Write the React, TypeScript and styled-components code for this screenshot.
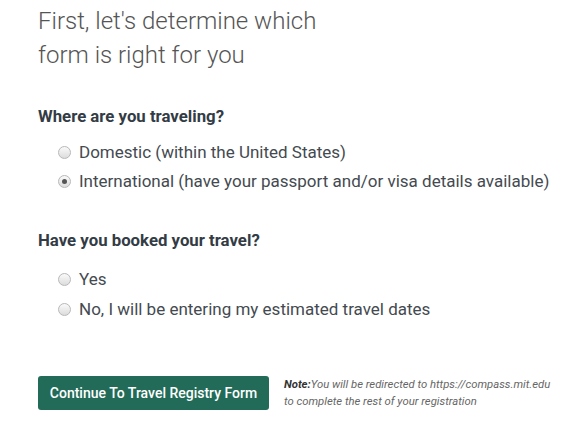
import React from "react";
import styled, { createGlobalStyle } from "styled-components";

const Global = createGlobalStyle`
  html, body { margin: 0; padding: 0; background: #fff; }
  body { font-family: Roboto, "Liberation Sans", sans-serif; }
`;

const Page = styled.div`
  padding: 4px 0 0 38px;
  width: 583px;
  box-sizing: border-box;
`;

const Title = styled.h1`
  margin: 0;
  font-weight: 300;
  font-size: 24px;
  line-height: 34px;
  color: #555;
  width: 300px;
`;

const Question = styled.h2<{ $top: number }>`
  margin: ${(p) => p.$top}px 0 0 0;
  font-size: 16.8px;
  font-weight: 700;
  line-height: 20px;
  color: #333c45;
`;

const Options = styled.div<{ $top: number; $gap: number }>`
  display: flex;
  flex-direction: column;
  gap: ${(p) => p.$gap}px;
  margin: ${(p) => p.$top}px 0 0 20px;
`;

const Option = styled.label`
  display: flex;
  align-items: center;
  gap: 8px;
  font-size: 17px;
  line-height: 20px;
  color: #444a50;
`;

const Radio = styled.span<{ $checked?: boolean }>`
  width: 11px;
  height: 11px;
  border-radius: 50%;
  border: 1px solid #b8b8b8;
  background: linear-gradient(#fafafa, #dcdcdc);
  display: inline-flex;
  align-items: center;
  justify-content: center;
  flex: none;
  &::after {
    content: "";
    display: ${(p) => (p.$checked ? "block" : "none")};
    width: 5px;
    height: 5px;
    border-radius: 50%;
    background: #555;
  }
`;

const Footer = styled.div`
  display: flex;
  align-items: flex-start;
  gap: 15px;
  margin-top: 57px;
`;

const Button = styled.button`
  background: #226b58;
  color: #fff;
  border: none;
  border-radius: 3px;
  font-family: Roboto, "Liberation Sans", sans-serif;
  font-size: 14px;
  font-weight: 500;
  height: 34px;
  width: 231px;
  padding: 0;
  flex: none;
`;

const Note = styled.p`
  margin: 0;
  font-size: 11.3px;
  font-style: italic;
  line-height: 17px;
  color: #666;
  white-space: nowrap;
  b { font-weight: 700; color: #333; }
`;

export default function App() {
  return (
    <>
      <Global />
      <Page>
        <Title>First, let's determine which form is right for you</Title>
        <Question $top={34}>Where are you traveling?</Question>
        <Options $top={16} $gap={9}>
          <Option><Radio />Domestic (within the United States)</Option>
          <Option><Radio $checked />International (have your passport and/or visa details available)</Option>
        </Options>
        <Question $top={39}>Have you booked your travel?</Question>
        <Options $top={19} $gap={10}>
          <Option><Radio />Yes</Option>
          <Option><Radio />No, I will be entering my estimated travel dates</Option>
        </Options>
        <Footer>
          <Button>Continue To Travel Registry Form</Button>
          <Note>
            <b>Note:</b>You will be redirected to https://compass.mit.edu
            <br />
            to complete the rest of your registration
          </Note>
        </Footer>
      </Page>
    </>
  );
}
